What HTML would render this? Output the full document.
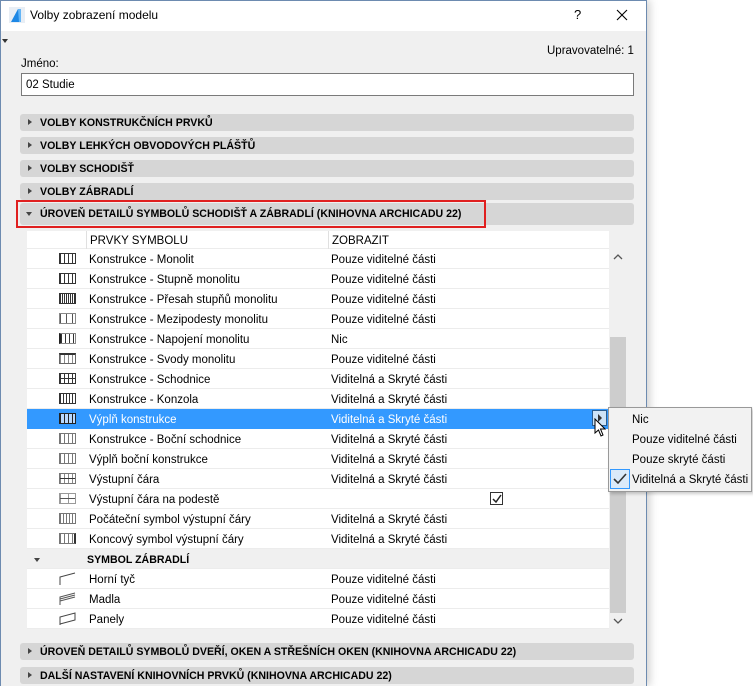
<!DOCTYPE html>
<html><head><meta charset="utf-8"><style>
*{margin:0;padding:0;box-sizing:border-box}
body{width:753px;height:686px;background:#fff;font-family:"Segoe UI","Liberation Sans","DejaVu Sans",sans-serif;font-size:11.5px;color:#000;position:relative;overflow:hidden}
.abs{position:absolute}
.dlg{left:0;top:0;width:647px;height:686px;background:#f0f0f0;border-left:1px solid #6d8bb0;border-right:1px solid #6d8bb0;border-top:1px solid #6d8bb0;box-shadow:3px 0 8px rgba(0,0,0,.18)}
.title{left:1px;top:1px;width:645px;height:30px;background:#fff}
.bar{left:20px;width:614px;height:17px;background:#d6d6d6;border-radius:3px;font-weight:bold;font-size:10.6px;line-height:19px;padding-left:20px;letter-spacing:0}
.bar:before{content:"";position:absolute;left:8px;top:5px;border-left:4px solid #444;border-top:3.5px solid transparent;border-bottom:3.5px solid transparent}
.bar.open:before{display:none}
.row{left:27px;width:582px;height:20px;background:#fff;border-bottom:1px solid #ececec;line-height:22px}
.row .n{position:absolute;left:62px}
.row .v{position:absolute;left:304px}
.ic{position:absolute;left:32px;top:4px;width:17px;height:11px;border:1px solid #333;background:repeating-linear-gradient(90deg,#333 0 1px,transparent 1px 4px)}
</style></head><body>
<div class="abs dlg"></div>
<div class="abs title"></div>
<svg class="abs" style="left:9px;top:7px" width="16" height="16"><rect x="0" y="0" width="16" height="16" fill="#e8eef5"/><path d="M2 15 L9 2 L12 2 L12 15 Z" fill="#1e88e5"/><path d="M9 2 L12 2 L12 15 L10 15 Z" fill="#64b5f6"/></svg>
<div class="abs" style="left:30px;top:8px;font-size:12px">Volby zobrazení modelu</div>
<div class="abs" style="left:574px;top:7px;font-size:13px">?</div>
<svg class="abs" style="left:616px;top:9px" width="12" height="12"><path d="M1 1L11 11M11 1L1 11" stroke="#000" stroke-width="1.1"/></svg>
<div class="abs" style="left:2px;top:39px;border-top:4px solid #333;border-left:3.5px solid transparent;border-right:3.5px solid transparent"></div>
<div class="abs" style="left:547px;top:45px">Upravovatelné: 1</div>
<div class="abs" style="left:21px;top:58px">Jméno:</div>
<div class="abs" style="left:21px;top:73px;width:613px;height:23px;background:#fff;border:1px solid #7a7a7a;padding:5px 4px 0">02 Studie</div>
<div class="abs bar" style="top:114px">VOLBY KONSTRUKČNÍCH PRVKŮ</div>
<div class="abs bar" style="top:137px">VOLBY LEHKÝCH OBVODOVÝCH PLÁŠŤŮ</div>
<div class="abs bar" style="top:160px">VOLBY SCHODIŠŤ</div>
<div class="abs bar" style="top:183px">VOLBY ZÁBRADLÍ</div>
<div class="abs bar open" style="top:203px;height:22px;line-height:23px;border-radius:3px">ÚROVEŇ DETAILŮ SYMBOLŮ SCHODIŠŤ A ZÁBRADLÍ (KNIHOVNA ARCHICADU 22)</div>
<div class="abs" style="left:26px;top:212px;border-top:4px solid #444;border-left:3.5px solid transparent;border-right:3.5px solid transparent"></div>
<div class="abs" style="left:16px;top:200px;width:470px;height:28px;border:2px solid #e02020"></div>
<div class="abs" style="left:27px;top:231px;width:582px;height:18px;background:#fff;border-bottom:1px solid #ececec;line-height:20px">
<div class="abs" style="left:59px;top:0;height:18px;border-left:1px solid #e0e0e0;padding-left:3px">PRVKY SYMBOLU</div>
<div class="abs" style="left:301px;top:0;height:18px;border-left:1px solid #e0e0e0;padding-left:3px">ZOBRAZIT</div></div>
<div class="abs" style="left:610px;top:246px;width:16px;height:384px;background:#f0f0f0"></div>
<div class="abs" style="left:610px;top:337px;width:16px;height:276px;background:#cdcdcd"></div>
<svg class="abs" style="left:613px;top:253px" width="10" height="8"><path d="M1 6L5 2L9 6" fill="none" stroke="#555" stroke-width="1.3"/></svg>
<svg class="abs" style="left:613px;top:617px" width="10" height="8"><path d="M1 2L5 6L9 2" fill="none" stroke="#555" stroke-width="1.3"/></svg>

<div class="abs row" style="top:249px"><i class="ic"></i><span class="n">Konstrukce - Monolit</span><span class="v">Pouze viditelné části</span></div>
<div class="abs row" style="top:269px"><i class="ic"></i><span class="n">Konstrukce - Stupně monolitu</span><span class="v">Pouze viditelné části</span></div>
<div class="abs row" style="top:289px"><i class="ic" style="background:repeating-linear-gradient(90deg,#333 0 1px,transparent 1px 2px)"></i><span class="n">Konstrukce - Přesah stupňů monolitu</span><span class="v">Pouze viditelné části</span></div>
<div class="abs row" style="top:309px"><i class="ic" style="border-color:#888;background:repeating-linear-gradient(90deg,#555 0 1px,transparent 1px 6px)"></i><span class="n">Konstrukce - Mezipodesty monolitu</span><span class="v">Pouze viditelné části</span></div>
<div class="abs row" style="top:329px"><i class="ic" style="border-color:#888;border-left:2px solid #222"></i><span class="n">Konstrukce - Napojení monolitu</span><span class="v">Nic</span></div>
<div class="abs row" style="top:349px"><i class="ic" style="border-color:#666;border-top:2px solid #333;background:repeating-linear-gradient(90deg,#888 0 1px,transparent 1px 4px)"></i><span class="n">Konstrukce - Svody monolitu</span><span class="v">Pouze viditelné části</span></div>
<div class="abs row" style="top:369px"><i class="ic" style="background:linear-gradient(#333,#333) 0 4px/100% 1px no-repeat,repeating-linear-gradient(90deg,#333 0 1px,transparent 1px 4px)"></i><span class="n">Konstrukce - Schodnice</span><span class="v">Viditelná a Skryté části</span></div>
<div class="abs row" style="top:389px"><i class="ic" style="background:repeating-linear-gradient(90deg,#333 0 1px,transparent 1px 3px)"></i><span class="n">Konstrukce - Konzola</span><span class="v">Viditelná a Skryté části</span></div>
<div class="abs row" style="top:409px;background:#3399ff;color:#fff;border-color:#3399ff"><i class="ic" style="border-color:#222;background:repeating-linear-gradient(90deg,#222 0 1px,#b8d8ff 1px 4px)"></i><span class="n">Výplň konstrukce</span><span class="v">Viditelná a Skryté části</span></div>
<div class="abs row" style="top:429px"><i class="ic" style="border-color:#777;background:repeating-linear-gradient(90deg,#777 0 1px,transparent 1px 4px)"></i><span class="n">Konstrukce - Boční schodnice</span><span class="v">Viditelná a Skryté části</span></div>
<div class="abs row" style="top:449px"><i class="ic" style="border-color:#777;background:repeating-linear-gradient(90deg,#777 0 1px,transparent 1px 4px)"></i><span class="n">Výplň boční konstrukce</span><span class="v">Viditelná a Skryté části</span></div>
<div class="abs row" style="top:469px"><i class="ic" style="border-color:#777;background:linear-gradient(#333,#333) 0 4px/100% 1px no-repeat,repeating-linear-gradient(90deg,#888 0 1px,transparent 1px 4px)"></i><span class="n">Výstupní čára</span><span class="v">Viditelná a Skryté části</span></div>
<div class="abs row" style="top:489px"><i class="ic" style="border-color:#999;background:linear-gradient(#555,#555) 0 4px/100% 1px no-repeat,repeating-linear-gradient(90deg,#999 0 1px,transparent 1px 8px)"></i><span class="n">Výstupní čára na podestě</span></div>
<div class="abs" style="left:490px;top:492px;width:13px;height:13px;border:1px solid #333;background:#fff"></div>
<svg class="abs" style="left:492px;top:494px" width="10" height="10"><path d="M1 5L4 8L9 1" fill="none" stroke="#222" stroke-width="1.5"/></svg>
<div class="abs row" style="top:509px"><i class="ic" style="border-color:#777;background:repeating-linear-gradient(90deg,#777 0 1px,transparent 1px 3px)"></i><span class="n">Počáteční symbol výstupní čáry</span><span class="v">Viditelná a Skryté části</span></div>
<div class="abs row" style="top:529px"><i class="ic" style="border-color:#777;border-right:2px solid #333;background:repeating-linear-gradient(90deg,#777 0 1px,transparent 1px 4px)"></i><span class="n">Koncový symbol výstupní čáry</span><span class="v">Viditelná a Skryté části</span></div>
<div class="abs row" style="top:549px;background:#f0f0f0;font-weight:bold;font-size:10.6px"><span class="n" style="left:60px">SYMBOL ZÁBRADLÍ</span></div>
<div class="abs" style="left:34px;top:558px;border-top:4px solid #444;border-left:3.5px solid transparent;border-right:3.5px solid transparent"></div>
<div class="abs row" style="top:569px"><svg class="abs" style="left:32px;top:3px" width="18" height="14"><path d="M1 13V5L16 1" fill="none" stroke="#444"/></svg><span class="n">Horní tyč</span><span class="v">Pouze viditelné části</span></div>
<div class="abs row" style="top:589px"><svg class="abs" style="left:32px;top:3px" width="18" height="14"><path d="M1 13V5L16 1M1 7L16 3M1 9L16 5" fill="none" stroke="#555"/></svg><span class="n">Madla</span><span class="v">Pouze viditelné části</span></div>
<div class="abs row" style="top:609px"><svg class="abs" style="left:32px;top:3px" width="18" height="14"><path d="M1 13V5L16 1V8L1 12" fill="none" stroke="#444"/></svg><span class="n">Panely</span><span class="v">Pouze viditelné části</span></div>

<div class="abs bar" style="top:643px">ÚROVEŇ DETAILŮ SYMBOLŮ DVEŘÍ, OKEN A STŘEŠNÍCH OKEN (KNIHOVNA ARCHICADU 22)</div>
<div class="abs bar" style="top:667px">DALŠÍ NASTAVENÍ KNIHOVNÍCH PRVKŮ (KNIHOVNA ARCHICADU 22)</div>

<div class="abs" style="left:592px;top:410px;width:15px;height:16px;background:#cde3f7;border:1px solid #2a5d8f"></div>
<div class="abs" style="left:598px;top:414px;border-left:4px solid #333;border-top:4px solid transparent;border-bottom:4px solid transparent"></div>
<svg class="abs" style="left:594px;top:418px" width="12" height="20"><path d="M1 1V15L4.5 12L7 18L9 17L6.5 11H11Z" fill="#fff" stroke="#000" stroke-width="1"/></svg>

<div class="abs" style="left:608px;top:407px;width:144px;height:85px;background:#f2f2f2;border:1px solid #999;box-shadow:2px 2px 3px rgba(0,0,0,.2)"></div>
<div class="abs" style="left:632px;top:414px">Nic</div>
<div class="abs" style="left:632px;top:434px">Pouze viditelné části</div>
<div class="abs" style="left:632px;top:454px">Pouze skryté části</div>
<div class="abs" style="left:632px;top:474px">Viditelná a Skryté části</div>
<div class="abs" style="left:610px;top:469px;width:20px;height:20px;border:1px solid #3399ff;background:#dbeaf9"></div>
<svg class="abs" style="left:613px;top:472px" width="14" height="14"><path d="M1 7L5 11L13 2" fill="none" stroke="#333" stroke-width="1.6"/></svg>
</body></html>
